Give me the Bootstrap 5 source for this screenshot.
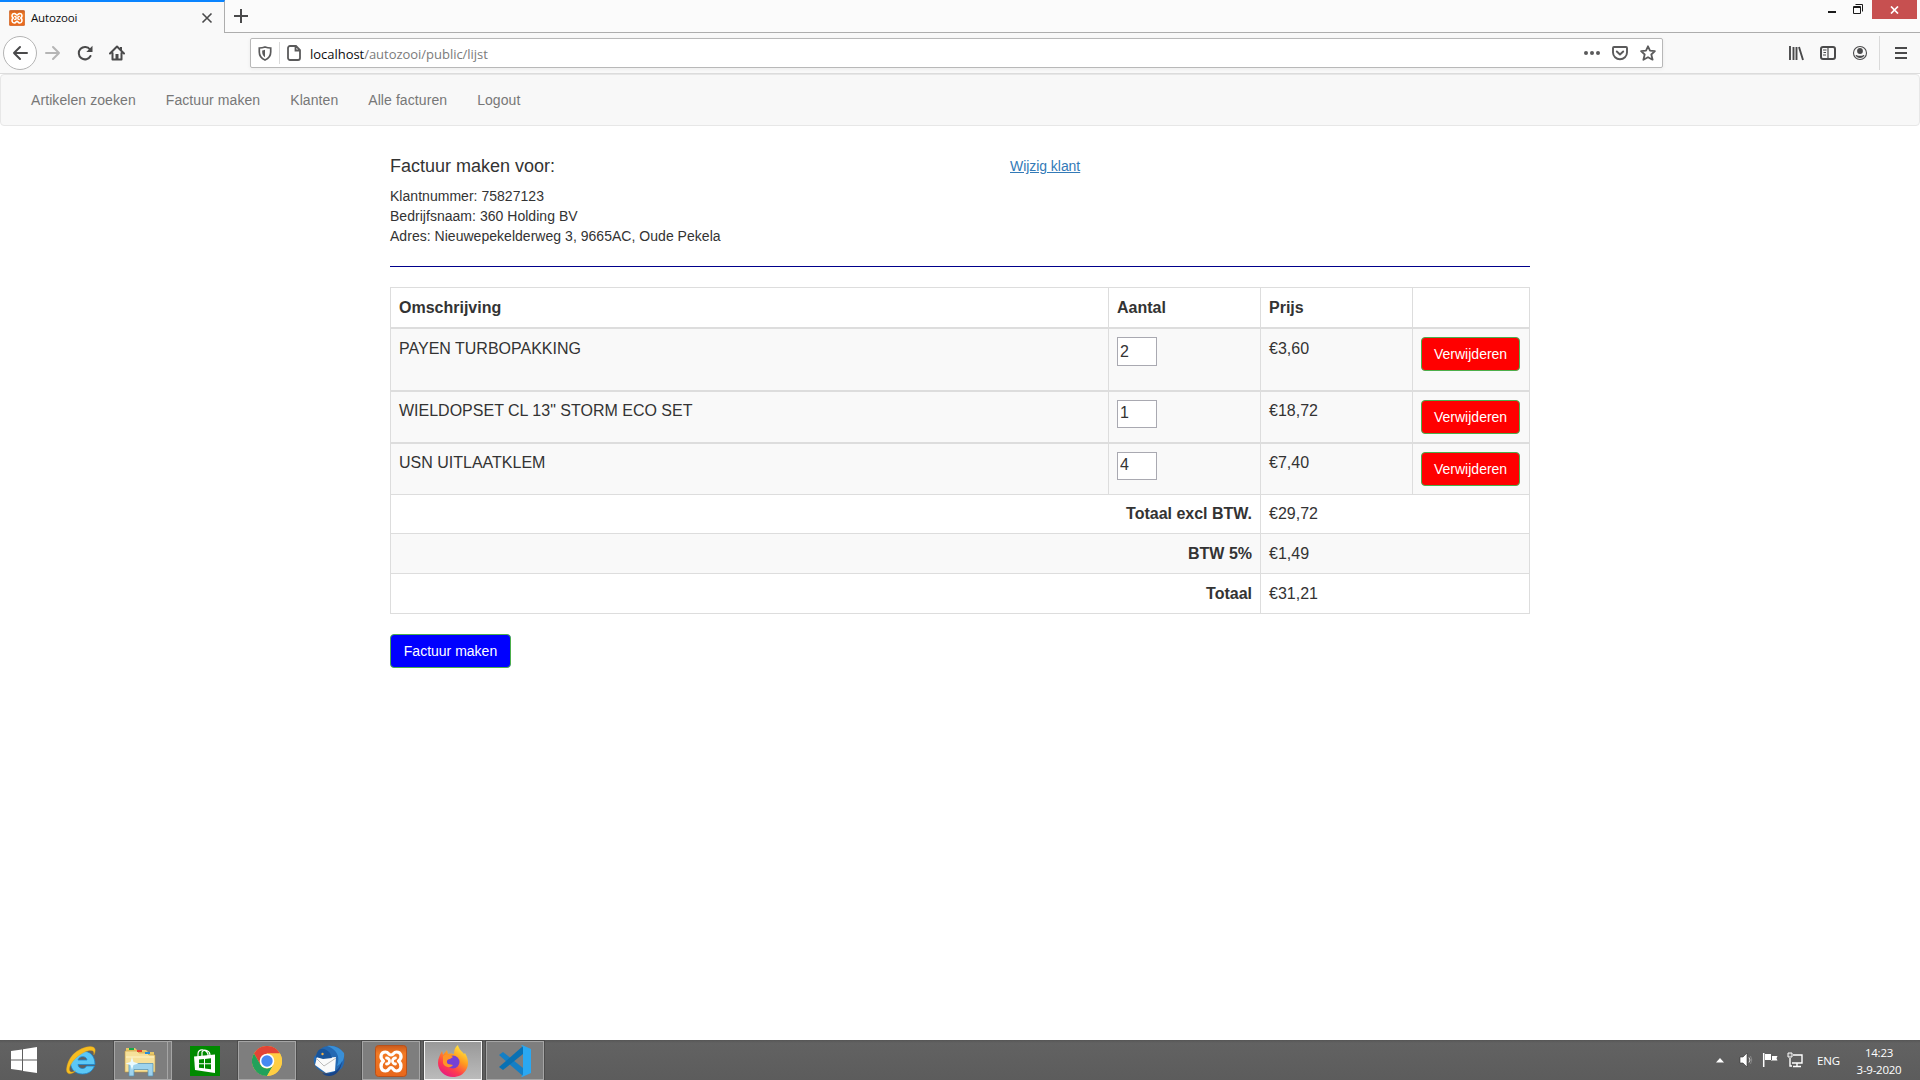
<!DOCTYPE html>
<html lang="nl">
<head>
<meta charset="utf-8">
<title>Autozooi</title>
<link href="https://cdn.jsdelivr.net/npm/bootstrap@5.3.0/dist/css/bootstrap.min.css" rel="stylesheet">
<style>
body{width:1920px;height:1080px;overflow:hidden;background:#fff;color:#333;font-family:"Liberation Sans",Arial,sans-serif;font-size:14px;line-height:20px}
svg{display:block;flex:none}
.chrome-font{font-family:"Open Sans","Noto Sans",sans-serif}
.tabstrip{height:33px;background:#fbfbfb}
.tab-active{width:225px;background:#f9f9f9;border-top:2px solid #0a84ff;border-right:1px solid #adadad;padding:0 11px 0 9px;font-size:11.500px;letter-spacing:-.15px;color:#0c0c0d}
.tab-label{margin-left:6px}
.tab-rest{border-bottom:1px solid #adadad}
.close-box{width:45px;height:19px;background:#c75050;margin-right:3px;margin-left:4px}
.toolbar{height:41px;background:#f9f9f9;border-bottom:1px solid #dcdcdc;color:#4a4a4b}
.back-btn{width:34px;height:34px;border:1px solid #b4b4b4;border-radius:50%;background:#fff;margin-left:3px}
.tool-icon{margin-left:16px}
.forward-icon{margin-left:8px}
.url-icon{margin-left:12px}
.urlbar{width:1413px;height:30px;margin-left:125px;background:#fff;border:1px solid #b8b8b8;border-radius:2px;box-shadow:0 1px 4px rgba(0,0,0,.06);font-size:13px;color:#7b7b7b;letter-spacing:-.03px;padding-left:7px;padding-right:6px}
.urlbar b{font-weight:400;color:#0c0c0d}
.url-text{margin-left:9px;padding-top:1px}
.vline{width:1px;background:#dadada}
.url-sep{height:22px;margin:0 7px}
.menu-sep{height:34px;margin-left:11px;margin-right:15px}
.menu-icon{margin-right:13px}
.site-nav{height:52px;padding:0 15px;background:#f8f8f8;border:1px solid #e7e7e7;border-radius:4px}
.site-nav .nav-link{padding:15px;color:#777;line-height:20px;font-size:14px;height:50px;letter-spacing:.08px}
.page-area{height:966px}
.invoice{width:1140px;margin:0 auto;padding-top:30px}
.invoice h4{font-size:18px;line-height:20px;font-weight:400;margin:0 0 10px}
.klant-info{width:620px}
.info-line{letter-spacing:.03px}
.klant-link{color:#337ab7;text-decoration:underline;letter-spacing:-.05px}
.rule{height:1px;background:#00008b;margin:20px 0}
.lines{width:1140px;table-layout:fixed;border-collapse:separate;border-spacing:0;border-right:1px solid #ddd;border-bottom:1px solid #ddd;font-size:16px;line-height:23px}
.col-desc{width:718px}
.col-num{width:152px}
.lines th,.lines td{border-top:1px solid #ddd;border-left:1px solid #ddd;padding:8px;vertical-align:top}
.lines tr{height:40px}
.lines .item td{border-top-width:2px;background:#f9f9f9}
.lines .item{height:52px}
.lines .first{height:63px}
.lines .item:not(.first) td:nth-child(odd){padding-top:7px}
.lines .sum{height:39px}
.lines .sum>*,.lines .sum~tr>*{padding-top:7px;padding-bottom:8px}
.lines .shade>*{background:#f9f9f9}
.lines .sum~tr>*{padding-top:8px}
.qty{display:block;width:40px;height:28px;border:1px solid #a9a9b1;background:#fff;color:#333;padding:0 2px 2px;font-size:16px;line-height:22px;border-radius:0}
.first .qty{height:29px;padding-bottom:0}
.btn-bs{display:block;height:34px;padding:6px 12px;font-size:14px;line-height:20px;border:1px solid #4cae4c;border-radius:4px;color:#fff}
.btn-bs.red{background:#f00;width:99px}
.btn-bs.blue{background:#00f;width:121px;margin-top:20px}
.taskbar{height:40px;background:linear-gradient(#565656,#626262 8%,#5c5c5c);color:#fff;font-size:11.500px}
.start{width:52px;padding-left:11px}
.task{width:58px;height:39px;margin-top:1px;margin-right:4px;border:1px solid transparent}
.task.open{background:#7e7e7e;border-color:#a5a5a5;box-shadow:0 0 0 1px #4c4c4c}
.task.current{background:linear-gradient(#999,#bbb);border-color:#f4f4f4;box-shadow:0 0 0 1px #4c4c4c}
.task.stacked{width:54px;margin-right:0;padding-right:3px}
.stack-edge{width:4px;height:39px;margin-top:1px;background:#7e7e7e;border:1px solid #a5a5a5;border-left:0}
.after-stack{margin-left:4px}
.tray-icon{margin-left:9px}
.tray-volume{margin-left:15px}
.lang-label{margin-left:14px;padding-top:2px;letter-spacing:-.1px}
.clock{line-height:17px;width:50px;letter-spacing:-.25px;margin-left:14px;margin-right:16px;padding-top:1px}
</style>
<script src="https://cdn.jsdelivr.net/npm/bootstrap@5.3.0/dist/js/bootstrap.bundle.min.js"></script>
</head>
<body>
<svg width="0" height="0" class="position-absolute">
<defs>
<linearGradient id="orange" x2="0" y2="1"><stop stop-color="#c95a1d"/><stop offset=".25" stop-color="#f27a24"/><stop offset="1" stop-color="#e8671b"/></linearGradient>
<symbol id="xampp" viewBox="0 0 32 32"><rect x=".5" y=".5" width="31" height="31" rx="3" fill="url(#orange)" stroke="#b9511a"/><path d="M8.500 16C4 12.500 6 7 10.500 7c3.500 0 2.500 3 5.500 3s2-3 5.500-3C26 7 28 12.500 23.500 16 28 19.500 26 26 21.500 26c-4 0-3-3.500-5.500-3.500S14.500 26 10.500 26C6 26 4 19.500 8.500 16z" fill="none" stroke="#fff" stroke-width="3.200" stroke-linejoin="round"/><path d="M11.500 13c1.500 0 3 1.300 3 3s-1.500 3-3 3M20.500 13c-1.500 0-3 1.300-3 3s1.500 3 3 3" fill="none" stroke="#fff" stroke-width="2.800" stroke-linecap="round"/></symbol>
</defs>
</svg>

<header class="chrome-font">
<div class="tabstrip d-flex">
 <div class="tab-active d-flex align-items-center">
  <svg width="16" height="16"><use href="#xampp"/></svg><span class="tab-label flex-grow-1">Autozooi</span>
  <svg width="12" height="12" viewBox="0 0 12 12"><path d="M1.500 1.500l9 9m0-9l-9 9" stroke="#4a4a4b" stroke-width="1.600"/></svg>
 </div>
 <div class="tab-rest d-flex flex-grow-1">
  <svg class="ms-2 mt-2" width="16" height="16" viewBox="0 0 16 16"><path d="M8 1v14M1 8h14" stroke="#4a4a4b" stroke-width="2"/></svg>
  <svg class="ms-auto" width="45" height="20" viewBox="0 0 45 20"><path d="M5 11h8v2H5z" fill="#1b1b1b"/><path d="M30.500 6.500h7v7h-7zM30 7.500h8M32.500 4.500h7v7" fill="none" stroke="#1b1b1b"/></svg>
  <div class="close-box d-flex align-items-center justify-content-center" ><svg width="9" height="8" viewBox="0 0 9 8"><path d="M1 .5l7 7m0-7l-7 7" stroke="#fff" stroke-width="1.700"/></svg></div>
 </div>
</div>
<div class="toolbar d-flex align-items-center">
 <div class="back-btn d-flex align-items-center justify-content-center"><svg width="16" height="16" viewBox="0 0 16 16"><path d="M15 8H2m6-6L2 8l6 6" fill="none" stroke="#4a4a4b" stroke-width="2" stroke-linecap="round" stroke-linejoin="round"/></svg></div>
 <svg class="forward-icon" width="16" height="16" viewBox="0 0 16 16"><path d="M1 8h13M8 2l6 6-6 6" fill="none" stroke="#b5b5b5" stroke-width="2" stroke-linecap="round" stroke-linejoin="round"/></svg>
 <svg class="tool-icon" width="16" height="16" viewBox="0 0 16 16"><path d="M13 4.500A6.200 6.200 0 1 0 13.500 11" fill="none" stroke="#4a4a4b" stroke-width="2" stroke-linecap="round"/><path d="M15.500.8V7H9.300z" fill="#4a4a4b"/></svg>
 <svg class="tool-icon" width="16" height="16" viewBox="0 0 16 16"><path d="M1 8.500L8 1.500l7 7M3.500 8v6.500h9V8" fill="none" stroke="#4a4a4b" stroke-width="2" stroke-linecap="round" stroke-linejoin="round"/><path d="M6.500 9h3v5.500h-3zM11 2h2v3h-2z" fill="#4a4a4b"/></svg>
 <div class="urlbar d-flex align-items-center">
  <svg width="14" height="15" viewBox="0 0 14 15"><path d="M7 1C5 1.700 3 2 1.300 2v4c0 4 2.500 6.700 5.700 8 3.200-1.300 5.700-4 5.700-8V2C11 2 9 1.700 7 1z" fill="none" stroke="#5a5a5b" stroke-width="1.700"/><path d="M7 3.800v7.500C5.200 10.100 4.200 8.300 4.200 6V4.400C5.100 4.300 6 4.200 7 3.800z" fill="#5a5a5b"/></svg>
  <span class="vline url-sep"></span>
  <svg width="14" height="16" viewBox="0 0 14 16"><path d="M3 1h6l4 4v8a2 2 0 0 1-2 2H3a2 2 0 0 1-2-2V3a2 2 0 0 1 2-2zM8.500 1v4.500H13" fill="none" stroke="#5a5a5b" stroke-width="1.800"/></svg>
  <span class="flex-grow-1 url-text"><b>localhost</b>/autozooi/public/lijst</span>
  <svg width="16" height="16" viewBox="0 0 16 16" fill="#5a5a5b"><circle cx="2" cy="8" r="2"/><circle cx="8" cy="8" r="2"/><circle cx="14" cy="8" r="2"/></svg>
  <svg class="url-icon" width="16" height="16" viewBox="0 0 16 16"><path d="M2 2h12a1 1 0 0 1 1 1v4.500a7 6.700 0 0 1-14 0V3a1 1 0 0 1 1-1zM4.800 6.500L8 9.500l3.200-3" fill="none" stroke="#5a5a5b" stroke-width="1.900" stroke-linecap="round" stroke-linejoin="round"/></svg>
  <svg class="url-icon" width="16" height="16" viewBox="0 0 16 16"><path d="M8 1.300l2 4.400 4.900.5-3.600 3.300 1.300 5.200L8 12.200l-4.600 2.500 1.300-5.200L1.100 6.200 6 5.700z" fill="none" stroke="#5a5a5b" stroke-width="1.800" stroke-linejoin="round"/></svg>
 </div>
 <div class="ms-auto d-flex align-items-center h-100">
  <svg width="16" height="16" viewBox="0 0 16 16"><path d="M2 1v14M5.500 2v13M8.500 2v13M11 2l4 13" stroke="#4a4a4b" stroke-width="1.900"/></svg>
  <svg class="tool-icon" width="16" height="16" viewBox="0 0 16 16"><rect x="1" y="2" width="14" height="12" rx="2" fill="none" stroke="#4a4a4b" stroke-width="2"/><path d="M8 2v12" stroke="#4a4a4b" stroke-width="1.200"/><path d="M3 5h3.500M3.500 7.500h2.500M3 10h3" stroke="#4a4a4b"/></svg>
  <svg class="tool-icon" width="16" height="16" viewBox="0 0 16 16"><circle cx="8" cy="8" r="6.500" fill="none" stroke="#4a4a4b" stroke-width="1.100"/><circle cx="8" cy="6" r="2.900" fill="#4a4a4b"/><path d="M3.500 10c1.500 0 2 .8 4.500.8s3-.8 4.500-.8C12 12 10 13 8 13s-4-1-4.500-3z" fill="#4a4a4b"/></svg>
  <span class="vline menu-sep"></span>
  <svg class="menu-icon" width="12" height="14" viewBox="0 0 12 14"><path d="M0 2h12M0 7h12M0 12h12" stroke="#4a4a4b" stroke-width="2"/></svg>
 </div>
</div>
</header>

<main class="page-area">
<nav class="site-nav"><div class="nav">
 <a class="nav-link">Artikelen zoeken</a><a class="nav-link">Factuur maken</a><a class="nav-link">Klanten</a><a class="nav-link">Alle facturen</a><a class="nav-link">Logout</a>
</div></nav>
<section class="invoice">
 <div class="d-flex">
  <div class="klant-info"><h4>Factuur maken voor:</h4><div class="info-line">Klantnummer: 75827123</div><div class="info-line">Bedrijfsnaam: 360 Holding BV</div><div class="info-line">Adres: Nieuwepekelderweg 3, 9665AC, Oude Pekela</div></div>
  <a class="klant-link">Wijzig klant</a>
 </div>
 <div class="rule"></div>
 <table class="lines">
  <colgroup><col class="col-desc"><col class="col-num"><col class="col-num"><col></colgroup>
  <thead><tr><th>Omschrijving</th><th>Aantal</th><th>Prijs</th><th></th></tr></thead>
  <tbody>
  <tr class="item first"><td>PAYEN TURBOPAKKING</td><td><input class="qty" value="2"></td><td>€3,60</td><td><button class="btn-bs red">Verwijderen</button></td></tr>
  <tr class="item"><td>WIELDOPSET CL 13" STORM ECO SET</td><td><input class="qty" value="1"></td><td>€18,72</td><td><button class="btn-bs red">Verwijderen</button></td></tr>
  <tr class="item"><td>USN UITLAATKLEM</td><td><input class="qty" value="4"></td><td>€7,40</td><td><button class="btn-bs red">Verwijderen</button></td></tr>
  <tr class="sum"><th colspan="2" class="text-end">Totaal excl BTW.</th><td colspan="2">€29,72</td></tr>
  <tr class="shade"><th colspan="2" class="text-end">BTW 5%</th><td colspan="2">€1,49</td></tr>
  <tr><th colspan="2" class="text-end">Totaal</th><td colspan="2">€31,21</td></tr>
  </tbody>
 </table>
 <button class="btn-bs blue">Factuur maken</button>
</section>
</main>

<footer class="taskbar chrome-font d-flex">
 <div class="start d-flex align-items-center"><svg width="26" height="26" viewBox="0 0 26 26" fill="#fff"><path d="M0 4l11-1.500v10H0zM12 2.300L26 0v12.500H12zM0 13.500h11v10L0 22zM12 13.500h14V26l-14-2z"/></svg></div>
 <div class="task d-flex align-items-center justify-content-center"><svg width="32" height="32" viewBox="0 0 32 32"><path d="M29.500 21c-2 5-6 8-12 8C10 29 5.500 24 5.500 17.500S10 6 17.500 6 30 11 30 19.500H13c.5 4.500 6.500 5.500 8.500 1.500zM13 15h9c-.5-4.500-8-4.500-9 0z" fill="#5cc8f5" fill-rule="evenodd" stroke="#1b87cf" stroke-width=".8"/><path d="M8 9.500C16 2 28-1 30 4c.5 2 0 4-1.200 6 .3-3-.3-4.500-2.800-4.500C20 5 6.500 14 4.500 23c-.7 4 2 5 6 3-4 4-9.500 4-9-2C2 19 4 14 8 9.500z" fill="#f7bd20" stroke="#d6991a" stroke-width=".4"/></svg></div>
 <div class="task open stacked d-flex align-items-center justify-content-center"><svg width="32" height="32" viewBox="0 0 32 32"><path d="M2 3h9l2 2h9l2 2h6v20H2z" fill="#e8c766"/><path d="M1 6h12l2 2h8l2 2h6v17L1 27z" fill="#f6e09a" stroke="#c69c3c" stroke-width=".6"/><path d="M5 4h5" stroke="#18a74a" stroke-width="2"/><path d="M13 6h5" stroke="#e3412d" stroke-width="2"/><path d="M21 8h5" stroke="#238ddb" stroke-width="2"/><path d="M2 12h28" stroke="#fff4c9"/><path d="M5 31V18.500h24V31h-5v-6.500H10V31z" fill="#9ed3ed" stroke="#508fb6" stroke-width=".7"/><path d="M8 12l1.500 5 5 1.500-5 1.500L8 25l-1.500-5-5-1.500 5-1.500z" fill="#eafaff"/></svg></div>
 <div class="stack-edge"></div>
 <div class="task after-stack d-flex align-items-center justify-content-center"><svg width="30" height="30" viewBox="0 0 30 30"><path fill="#008a00" d="M0 0h30v30H0z"/><path d="M4 10.500l21-2V27L5 24z" fill="#fff"/><path d="M8 12V8c0-6 8-5 10 0v2M12 10V6c2-4 8-1 8 3" fill="none" stroke="#fff" stroke-width="1.200"/><path d="M9 13.500l5-.5v4.300H9zM15 12.900l6-.6v5h-6zM9 18.300h5v4l-5-.5zM15 18.300h6v5l-6-.8z" fill="#008a00"/></svg></div>
 <div class="task open d-flex align-items-center justify-content-center"><svg width="30" height="30" viewBox="0 0 30 30"><circle cx="15" cy="15" r="15" fill="#ffce43"/><path d="M2 7.500A15 15 0 0 1 28 7.500H15L8.500 18.800z" fill="#e24436"/><path d="M2 7.500A15 15 0 0 0 15 30l6.500-11.200A7.500 7.500 0 0 1 8.500 18.700z" fill="#22a15b"/><path d="M15 7.500h13A15 15 0 0 1 15 30l6.500-11.200z" fill="#ffce43"/><circle cx="15" cy="15" r="7.300" fill="#fff"/><circle cx="15" cy="15" r="5.700" fill="#4688f2"/></svg></div>
 <div class="task d-flex align-items-center justify-content-center"><svg width="32" height="32" viewBox="0 0 32 32"><path d="M5 7C9 0 20-1 26 3c6 5 7 14 3 20-5 6-15 7-21 3C2 23 0 18 1 12l3-3z" fill="#2469b3"/><path d="M14 1c9 3 14 10 10 20 5-2 8-8 7-13C27 3 21 0 14 1z" fill="#398fd7"/><path d="M12 13l11-1-1 14-9 2-11-8 2-8z" fill="#fafafa"/><path d="M3 13l8 8 12-8" fill="none" stroke="#bbb"/><path d="M3 12C4 3 10 1 17 8l2 5-9 1z" fill="#18549a"/><circle cx="9.500" cy="9" r="1.200" fill="#f0b14a"/><path d="M9 28c8 2 17-1 20-12-1 9-6 15-13 15-3 0-5-1-7-3z" fill="#18458a"/></svg></div>
 <div class="task open d-flex align-items-center justify-content-center"><svg width="32" height="32"><use href="#xampp"/></svg></div>
 <div class="task current d-flex align-items-center justify-content-center"><svg width="32" height="32" viewBox="0 0 32 32"><defs><linearGradient id="ff" x1=".8" x2=".2" y2="1"><stop stop-color="#fff044"/><stop offset=".4" stop-color="#ff9a1f"/><stop offset=".7" stop-color="#ff3d4d"/><stop offset="1" stop-color="#e3158a"/></linearGradient></defs><path d="M5 6l1 4 4-5 1 4c3-1 5 0 6 0 0-4 1-7 4-9 1 5 4 6 6 9l1-1c3 5 4 10 2 15-3 7-9 9-14 9C8 32 1 26 1 18c0-5 2-8 4-12z" fill="url(#ff)"/><circle cx="16" cy="17" r="6.500" fill="#7541d5"/><path d="M6 11c4-3 7-1 10 1l-3 2c-3 0-4 3-2 5l5 1c-3 4-9 2-10-2z" fill="#ff9427"/></svg></div>
 <div class="task open d-flex align-items-center justify-content-center"><svg width="32" height="32" viewBox="0 0 32 32"><path d="M0 10l4-3 20 16v8z" fill="#147fc5"/><path d="M0 22l4 3L24 9V1z" fill="#0871b4"/><path d="M23 0l9 4v24l-9 4-1-1c1 0 2-.6 2-2V3c0-1.400-1-2-2-2z" fill="#2aa8f2"/></svg></div>

 <div class="ms-auto d-flex align-items-center">
  <svg width="8" height="5" viewBox="0 0 8 5"><path d="M0 4.500L4 0l4 4.500z" fill="#fff"/></svg>
  <svg class="tray-volume" width="14" height="14" viewBox="0 0 14 14"><path d="M1 4h3l4-4v14l-4-4H1z" fill="#fff" stroke="#333" stroke-width=".6"/><path d="M10 4.500q2 2.500 0 5" fill="none" stroke="#ddd"/><path d="M11.500 3q2.500 4 0 8" fill="none" stroke="#999" stroke-width=".7"/></svg>
  <svg class="tray-icon" width="16" height="16" viewBox="0 0 16 16"><path d="M1.700 1v14" stroke="#fff" stroke-width="1.500"/><path d="M3 2h6v6H3zM10 4h5.500l-1 2.300 1 2.200H9V8h1z" fill="#fff"/></svg>
  <svg class="tray-icon" width="16" height="16" viewBox="0 0 16 16"><path d="M6 3h9v8H5M10 11v3M6 14.500h8M3 6v8h2" fill="none" stroke="#fff" stroke-width="1.400"/><path d="M1 1h4v4H1z" fill="#777" stroke="#fff"/></svg>
  <span class="lang-label">ENG</span>
  <div class="clock text-center">14:23<br>3-9-2020</div>
 </div>
</footer>
</body>
</html>
